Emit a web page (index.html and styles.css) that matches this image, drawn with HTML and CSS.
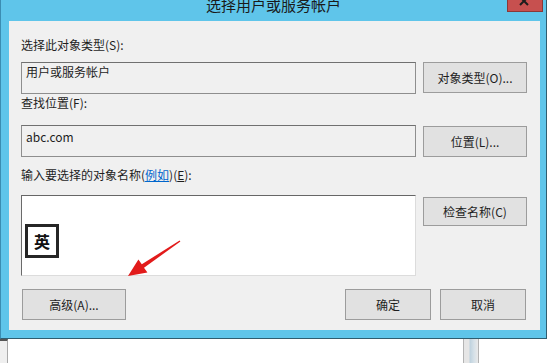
FILE: index.html
```html
<!DOCTYPE html>
<html lang="zh-CN">
<head>
    <meta charset="UTF-8">
    <title>选择用户或服务帐户</title>
    <link rel="stylesheet" href="styles.css">
</head>
<body>
    <div class="desk">
        <div class="window">
            <div class="titlebar">
                <span class="title">选择用户或服务帐户</span>
                <span class="close">
                    <svg width="36" height="12" viewBox="0 0 36 12">
                        <path d="M13 -3 L21 5 M21 -3 L13 5" stroke="#1c1c1c" stroke-width="2" fill="none"/>
                    </svg>
                </span>
            </div>
            <div class="frame">
                <div class="panel">
                    <div class="label">选择此对象类型(S):</div>
                    <div class="row row-first">
                        <div class="field">用户或服务帐户</div>
                        <div class="btn btn-side">对象类型(O)...</div>
                    </div>

                    <div class="label label-second">查找位置(F):</div>
                    <div class="row row-second">
                        <div class="field field-latin">abc.com</div>
                        <div class="btn btn-side btn-low">位置(L)...</div>
                    </div>

                    <div class="label label-third">输入要选择的对象名称(<a class="link" href="#">例如</a>)(<u>E</u>):</div>
                    <div class="row row-third">
                        <div class="names">
                            <div class="ime">英</div>
                        </div>
                        <div class="btn btn-side btn-check">检查名称(C)</div>
                    </div>

                    <div class="footer">
                        <div class="btn btn-advanced">高级(A)...</div>
                        <div class="footer-right">
                            <div class="btn btn-small">确定</div>
                            <div class="btn btn-small">取消</div>
                        </div>
                    </div>
                </div>
            </div>
        </div>
        <div class="below">
            <div class="below-edge"></div>
            <div></div>
            <div class="below-bar"></div>
        </div>
        <!-- red annotation arrow -->
        <svg class="arrow" width="555" height="363" viewBox="0 0 555 363">
            <polygon points="128,276 138.4,259.4 141.8,264.3 179.6,240.5 180.4,241.5 144,267.7 147.4,272.6" fill="#e21b1b"/>
        </svg>
    </div>
</body>
</html>
```

FILE: styles.css
```css
body {
    margin: 0;
    padding: 0;
    background: #fff;
    font-family: "Noto Sans CJK SC", "Microsoft YaHei", sans-serif;
    font-size: 12px;
    color: #1e1e1e;
}
.desk {
    position: relative;
    width: 555px;
    height: 363px;
    overflow: hidden;
}
.window {
    width: 545px;
    background: #5fc5ea;
    border-left: 1px solid #3b8db2;
    border-right: 1px solid #2f5d70;
    border-bottom: 1px solid #2f5d70;
}
.titlebar {
    height: 21px;
    display: grid;
    grid-template-columns: 1fr auto 1fr;
    align-items: start;
}
.title {
    grid-column: 2;
    font-size: 15px;
    line-height: 15px;
    margin-top: -3px;
    color: #1a1a1a;
    white-space: nowrap;
}
.close {
    grid-column: 3;
    justify-self: end;
    margin-right: 3px;
    width: 34px;
    height: 11px;
    background: #c7504f;
    border: 1px solid #8a3838;
    border-top: none;
    overflow: hidden;
}
.close svg {
    display: block;
    margin-left: -1px;
}
.frame {
    padding: 0 6px 8px 8px;
}
.panel {
    background: #f0f0f0;
    padding: 16px 13px 10px 12px;
}
.label {
    line-height: 16px;
    height: 16px;
    white-space: nowrap;
}
.label-second {
    margin-top: 1px;
}
.label-third {
    margin-top: 10px;
}
.link {
    color: #0066cc;
    text-decoration: underline;
}
.row {
    display: flex;
    align-items: flex-start;
    gap: 7px;
}
.row-first {
    margin-top: 9px;
}
.row-second {
    margin-top: 14px;
}
.row-third {
    margin-top: 12px;
}
.field {
    box-sizing: border-box;
    width: 395px;
    height: 32px;
    border: 1px solid #8e8e8e;
    border-top-color: #707070;
    background: #f0f0f0;
    padding: 1px 4px;
    line-height: 16px;
}
.field-latin {
    padding-top: 3px;
}
.names {
    position: relative;
    box-sizing: border-box;
    width: 395px;
    height: 81px;
    background: #fff;
    border-top: 1px solid #666;
    border-left: 1px solid #6a6a6a;
    border-right: 1px solid #dcdcdc;
    border-bottom: 1px solid #dcdcdc;
}
.ime {
    position: absolute;
    left: 3px;
    top: 28px;
    box-sizing: border-box;
    width: 34px;
    height: 34px;
    border: 3px solid #262626;
    background: #fff;
    font-size: 16px;
    font-weight: 700;
    line-height: 28px;
    text-align: center;
    color: #111;
}
.btn {
    box-sizing: border-box;
    height: 31px;
    background: #e1e1e1;
    border: 1px solid #9c9c9c;
    display: flex;
    align-items: center;
    justify-content: center;
    line-height: 16px;
    white-space: nowrap;
}
.btn-side {
    width: 104px;
}
.btn-low {
    margin-top: 1px;
    height: 31px;
}
.btn-check {
    margin-top: 2px;
    height: 29px;
}
.footer {
    margin-top: 13px;
    display: flex;
    justify-content: space-between;
    padding-right: 1px;
}
.btn-advanced {
    margin-left: 1px;
    width: 104px;
}
.footer-right {
    display: flex;
    gap: 9px;
}
.btn-small {
    width: 86px;
}
.below {
    display: grid;
    grid-template-columns: 8px 455px 16px 1fr;
    height: 24px;
}
.below-edge {
    background: #efefef;
    border-right: 1px solid #a9a9a9;
    border-top: 2px solid #555;
}
.below-bar {
    box-sizing: border-box;
    background: linear-gradient(to right, #e6e6e6 0, #e6e6e6 5px, #bfd2de 6px, #d6e1e8 10px, #e9e9e9 100%);
    border-left: 1px solid #b4b4b4;
    border-right: 1px solid #b4b4b4;
}
.arrow {
    position: absolute;
    left: 0;
    top: 0;
    pointer-events: none;
}
```
